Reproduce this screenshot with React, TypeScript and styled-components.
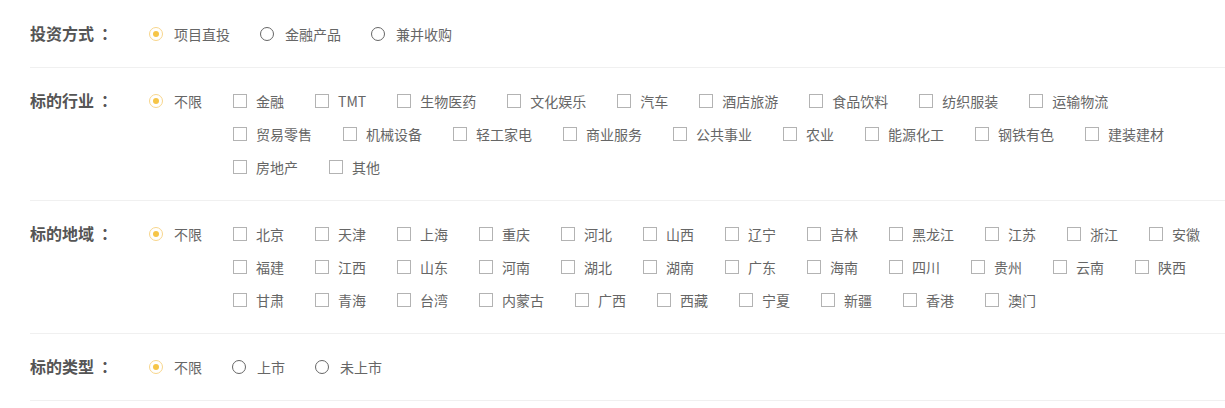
import styled, { createGlobalStyle } from "styled-components";

const GlobalStyle = createGlobalStyle`
  html, body {
    margin: 0;
    padding: 0;
    background: #fff;
    overflow: hidden;
  }
  body {
    font-family: "Noto Sans CJK SC", "Noto Sans", sans-serif;
  }
`;

type Group = {
  label: string;
  kind: "radio" | "check";
  options: string[];
};

const groups: Group[] = [
  {
    label: "投资方式",
    kind: "radio",
    options: ["项目直投", "金融产品", "兼并收购"],
  },
  {
    label: "标的行业",
    kind: "check",
    options: [
      "金融", "TMT", "生物医药", "文化娱乐", "汽车", "酒店旅游", "食品饮料",
      "纺织服装", "运输物流", "贸易零售", "机械设备", "轻工家电", "商业服务",
      "公共事业", "农业", "能源化工", "钢铁有色", "建装建材", "房地产", "其他",
    ],
  },
  {
    label: "标的地域",
    kind: "check",
    options: [
      "北京", "天津", "上海", "重庆", "河北", "山西", "辽宁", "吉林", "黑龙江",
      "江苏", "浙江", "安徽", "福建", "江西", "山东", "河南", "湖北", "湖南",
      "广东", "海南", "四川", "贵州", "云南", "陕西", "甘肃", "青海", "台湾",
      "内蒙古", "广西", "西藏", "宁夏", "新疆", "香港", "澳门",
    ],
  },
  {
    label: "标的类型",
    kind: "radio",
    options: ["不限", "上市", "未上市"],
  },
];

export default function App() {
  return (
    <>
      <GlobalStyle />
      <Page>
        {groups.map((g) => (
          <Section key={g.label}>
            <Label>
              {g.label}
              <Colon>：</Colon>
            </Label>
            {g.kind === "radio" ? (
              <Options>
                {g.options.map((r, i) => (
                  <Item key={r} $gap={30}>
                    <Radio $checked={i === 0} />
                    {r}
                  </Item>
                ))}
              </Options>
            ) : (
              <>
                <Item $gap={31}>
                  <Radio $checked />
                  不限
                </Item>
                <CheckList>
                  {g.options.map((o) => (
                    <Item key={o} $gap={31}>
                      <Check />
                      {o}
                    </Item>
                  ))}
                </CheckList>
              </>
            )}
          </Section>
        ))}
      </Page>
    </>
  );
}

const Page = styled.div`
  padding: 1px 0 0 30px;
  width: 1195px;
`;

const Section = styled.div`
  display: flex;
  align-items: flex-start;
  padding: 16px 0 17px;
  border-bottom: 1px solid #f0f0f0;
`;

const Label = styled.div`
  flex: none;
  width: 119px;
  line-height: 33px;
  font-size: 16px;
  font-weight: 700;
  color: #555;
  white-space: nowrap;
`;

const Colon = styled.span`
  margin-left: 7px;
`;

const Options = styled.div`
  display: flex;
  flex-wrap: wrap;
`;

const CheckList = styled.div`
  flex: none;
  width: 1008px;
  display: flex;
  flex-wrap: wrap;
`;

const Item = styled.label<{ $gap: number }>`
  flex: none;
  display: inline-flex;
  align-items: center;
  height: 33px;
  margin-right: ${(p) => p.$gap}px;
  font-size: 14px;
  color: #666;
  white-space: nowrap;
  cursor: pointer;
`;

const Radio = styled.span<{ $checked?: boolean }>`
  position: relative;
  box-sizing: border-box;
  width: 14px;
  height: 14px;
  margin-right: 11px;
  border-radius: 50%;
  border: 1px solid ${(p) => (p.$checked ? "#f8d68c" : "#666")};

  &::after {
    content: "";
    display: ${(p) => (p.$checked ? "block" : "none")};
    position: absolute;
    left: 3px;
    top: 3px;
    width: 6px;
    height: 6px;
    border-radius: 50%;
    background: #f6c547;
  }
`;

const Check = styled.span`
  box-sizing: border-box;
  width: 14px;
  height: 14px;
  margin-right: 9px;
  border: 1px solid #b3b3b3;
  background: #fff;
`;
